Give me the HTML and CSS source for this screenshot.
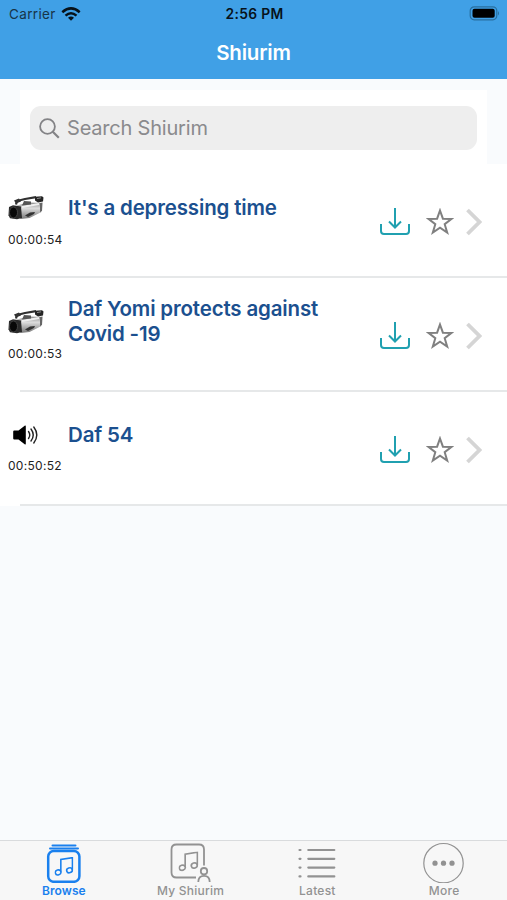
FILE: index.html
```html
<!DOCTYPE html>
<html lang="en">
<head>
<meta charset="utf-8">
<title>Shiurim</title>
<link rel="stylesheet" href="styles.css">
</head>
<body>
<svg class="defs" width="0" height="0" aria-hidden="true">
  <defs>
    <linearGradient id="metal" x1="0" y1="0" x2="0" y2="1"><stop offset="0" stop-color="#888"/><stop offset=".35" stop-color="#ddd"/><stop offset="1" stop-color="#777"/></linearGradient>
    <symbol id="camera" viewBox="0 0 38 26">
      <path d="M9 9.500L20 6.500l14 .5-.5 9-12 6-9 1z" fill="url(#metal)"/>
      <path d="M14 11l17-3" stroke="#eee" stroke-width="2"/>
      <path d="M8 8.500l1-3.500 8-2 11-1.800" fill="none" stroke="#303030" stroke-width="2.200" stroke-linejoin="round"/>
      <path d="M6 4.500l5-2 2 3-5 2z" fill="#333"/>
      <path d="M16 5l7 .5v3l-9 1z" fill="#555"/>
      <path d="M27 .8l7-.6 1.500 1.300-.5 4-5 1-3-2z" fill="#252525"/>
      <path d="M29 2.600l4-.8" stroke="#888"/>
      <path d="M1 11l4-1.800 8 1.300 1 11.500-5 1.200-7-1-1.500-3z" fill="#2a2a2a"/>
      <ellipse cx="5.500" cy="16.500" rx="4" ry="5.500" fill="#080808" stroke="#555" stroke-width=".7"/>
      <path d="M17 19.500l5-3 5-.5-1 2-6 3z" fill="#333"/>
      <path d="M32 7l2.500-.5-.5 8-2 2z" fill="#666"/>
    </symbol>
    <symbol id="download" viewBox="0 0 32 32"><path d="M16 2v19M10 15.500l6 6 6-6M2 18v7q0 3 3 3h22q3 0 3-3v-7" fill="none" stroke="#20a0b0" stroke-width="2"/></symbol>
    <symbol id="star" viewBox="0 0 28 28"><path d="M14 2.500l2.900 8.200 8.700.2-6.900 5.300 2.500 8.400-7.200-5-7.200 5 2.500-8.400-6.900-5.300 8.700-.2z" fill="none" stroke="#808080" stroke-width="2"/></symbol>
    <symbol id="chevron" viewBox="0 0 16 28"><path d="M1.500 2l12 12-12 12" fill="none" stroke="#d5d5d5" stroke-width="3.800"/></symbol>
    <symbol id="notes" viewBox="0 0 18 18"><g fill="none" stroke="currentColor" stroke-width="1.500"><ellipse cx="3.400" cy="14.600" rx="2.700" ry="2.300" transform="rotate(-18 3.400 14.600)"/><ellipse cx="14.200" cy="12.600" rx="2.700" ry="2.300" transform="rotate(-18 14.200 12.600)"/><path d="M6 14V2.400l11-1.800v11.500"/></g></symbol>
  </defs>
</svg>
<div class="screen">
  <header class="header">
    <div class="status">
      <div class="carrier"><span>Carrier</span><svg width="20" height="14" viewBox="0 0 20 14"><g fill="none" stroke="#07121a" stroke-width="2.500"><path d="M1.300 5.200Q10-2.500 18.700 5.200M4.500 8.600Q10 3.800 15.500 8.600"/></g><path d="M7 10.700q3-2.500 6 0L10 13.800z" fill="#07121a"/></svg></div>
      <span class="clock">2:56 PM</span>
      <svg class="battery" width="31" height="15" viewBox="0 0 31 15"><rect x="1.200" y=".8" width="26.600" height="13" rx="4" fill="none" stroke="#286f9f" stroke-width="1.200"/><rect x="3.500" y="2.800" width="22.200" height="9" rx="2" fill="#000"/><path d="M29 5q2 2.300 0 4.600z" fill="#286f9f"/></svg>
    </div>
    <h1>Shiurim</h1>
  </header>
  <div class="search-panel"><div class="search"><svg width="21" height="21" viewBox="0 0 21 21" fill="none" stroke="#838386" stroke-width="1.800"><circle cx="8.500" cy="8.500" r="7.400"/><path d="M13.800 13.800l6 6" stroke-width="2.200"/></svg><span>Search Shiurim</span></div></div>
  <main>
    <article class="row">
      <div class="media"><svg class="cam" width="38" height="26"><use href="#camera"/></svg><span class="time">00:00:54</span></div>
      <h2><span>It's a depressing time</span></h2>
      <div class="actions"><svg width="32" height="32"><use href="#download"/></svg><svg width="28" height="28"><use href="#star"/></svg><svg width="16" height="28"><use href="#chevron"/></svg></div>
    </article>
    <article class="row">
      <div class="media"><svg class="cam" width="38" height="26"><use href="#camera"/></svg><span class="time">00:00:53</span></div>
      <h2><span>Daf Yomi protects against</span><span>Covid -19</span></h2>
      <div class="actions"><svg width="32" height="32"><use href="#download"/></svg><svg width="28" height="28"><use href="#star"/></svg><svg width="16" height="28"><use href="#chevron"/></svg></div>
    </article>
    <article class="row">
      <div class="media"><svg class="speaker" width="38" height="26" viewBox="0 0 38 26"><path d="M5.200 9.500q0-1 1-1h4.300l6.500-5q.8-.4.800.7v17.600q0 1-.8.600l-6.500-4.900H6.200q-1 0-1-1z" fill="#000"/><g fill="none" stroke="#222" stroke-width="1.400" stroke-linecap="round"><path d="M20.500 9.500q2.500 3.500 0 7M23 7q4.500 6 0 12M25.800 5q6 8 0 16"/></g></svg><span class="time">00:50:52</span></div>
      <h2><span>Daf 54</span></h2>
      <div class="actions"><svg width="32" height="32"><use href="#download"/></svg><svg width="28" height="28"><use href="#star"/></svg><svg width="16" height="28"><use href="#chevron"/></svg></div>
    </article>
  </main>
  <nav class="tabs">
    <div class="tab active"><svg width="44" height="42" viewBox="0 0 44 42"><g fill="none" stroke="currentColor" stroke-width="2"><path d="M10.500 4.500h23M8 7.400h28" stroke-linecap="round"/><rect x="6.200" y="10" width="31.200" height="30.800" rx="5.500" stroke-width="2.500"/></g><use href="#notes" x="12.500" y="16" width="19" height="19"/></svg><span>Browse</span></div>
    <div class="tab"><svg width="44" height="42" viewBox="0 0 44 42"><g fill="none" stroke="currentColor" stroke-width="1.800"><path d="M27 36.500H7.500q-5 0-5-5V8.500q0-5 5-5H30q5 0 5 5V24.500"/><circle cx="35" cy="30.200" r="3.200"/><path d="M29.300 41q0-6.200 5.700-6.200t5.700 6.200"/></g><use href="#notes" x="9.500" y="10.500" width="20" height="20"/></svg><span>My Shiurim</span></div>
    <div class="tab"><svg width="44" height="42" viewBox="0 0 44 42" stroke="currentColor" stroke-width="2.200" stroke-linecap="round"><path d="M4.500 9h1M4.500 17.800h1M4.500 26.600h1M4.500 35.400h1M13.300 9h26M13.300 17.800h26M13.300 26.600h26M13.300 35.400h26"/></svg><span>Latest</span></div>
    <div class="tab"><svg width="44" height="42" viewBox="0 0 44 42"><circle cx="21.500" cy="22.200" r="19.700" fill="none" stroke="currentColor" stroke-width="1.200"/><g fill="currentColor"><circle cx="13" cy="22.200" r="2.600"/><circle cx="21.500" cy="22.200" r="2.600"/><circle cx="30" cy="22.200" r="2.600"/></g></svg><span>More</span></div>
  </nav>
</div>
</body>
</html>
```
FILE: styles.css
```css
* { box-sizing: border-box; }
body { margin: 0; font-family: Inter, "Liberation Sans", sans-serif; }
svg { display: block; flex: none; }
.defs { position: absolute; }
.screen { width: 507px; height: 900px; display: flex; flex-direction: column; background: #f9fbfd; overflow: hidden; }
.header { height: 79px; flex: none; background: #40a0e6; }
.status { height: 27px; padding: 0 7px 0 9px; display: grid; grid-template-columns: 1fr auto 1fr; align-items: center; color: #07121a; font-size: 13.5px; }
.carrier { display: flex; align-items: center; gap: 5px; color: #173448; letter-spacing: .35px; }
.clock { font-weight: 600; font-size: 13.8px; letter-spacing: .35px; }
.battery { justify-self: end; }
h1 { margin: 0; height: 51px; line-height: 51px; text-align: center; color: #fff; font-size: 20.500px; font-weight: 600; letter-spacing: -.2px; }
.search-panel { flex: none; height: 74px; margin: 11px 20px 0; padding: 16px 10px 14px; background: #fff; }
.search { height: 44px; display: flex; align-items: center; gap: 7px; padding-left: 9px; border-radius: 11px; background: #eee; color: #8a8a8d; font-size: 20px; letter-spacing: -.2px; }
main { flex: none; background: #fff; }
.row { height: 113.900px; padding-left: 8px; display: grid; grid-template-columns: 60px 311px 1fr; background: linear-gradient(#e6e8e9, #e6e8e9) 20px 100% / 100% 2px no-repeat; }
.media { padding-top: 32px; }
.speaker { margin-top: -2px; margin-bottom: 2px; }
.time { display: block; margin-top: 10px; line-height: 16px; font-size: 12px; letter-spacing: .3px; color: #222; white-space: nowrap; }
h2 { margin: 0 0 26px; display: flex; flex-direction: column; justify-content: center; color: #1b508f; font-size: 20.500px; line-height: 24.500px; font-weight: 600; letter-spacing: -.16px; white-space: nowrap; }
.actions { display: flex; align-items: center; padding-top: 3px; }
.actions svg:nth-child(2) { margin-left: 14.500px; }
.actions svg:nth-child(3) { margin-left: 12.500px; }
.tabs { height: 60px; margin-top: auto; flex: none; border-top: 1px solid #d9dbdd; background: #f7f7f7; display: grid; grid-template-columns: repeat(4, 1fr); }
.tab { display: flex; flex-direction: column; align-items: center; padding-left: 1px; color: #929292; font-size: 12px; font-weight: 500; letter-spacing: .25px; }
.tab span { line-height: 16px; }
.tab.active { color: #1a80ee; font-weight: 600; letter-spacing: .1px; }
```
